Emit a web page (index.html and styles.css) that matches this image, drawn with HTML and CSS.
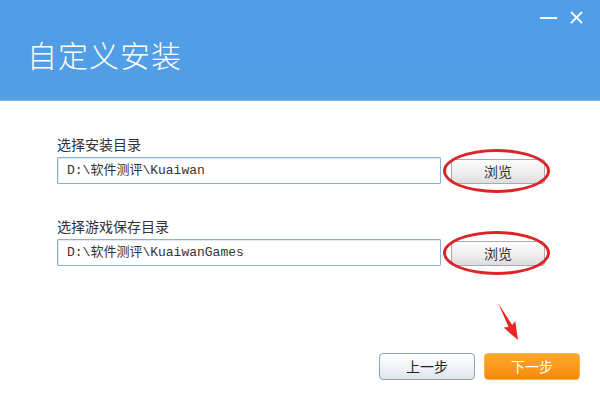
FILE: index.html
```html
<!DOCTYPE html>
<html lang="zh-CN">
<head>
<meta charset="utf-8">
<title>自定义安装</title>
<link rel="stylesheet" href="styles.css">
</head>
<body>
<div class="window">
  <header class="header">
    <h1 class="title">自定义安装</h1>
    <div class="controls">
      <span class="min"></span>
      <svg class="close" width="13" height="13" viewBox="0 0 13 13"><path d="M1 1L12 12M12 1L1 12" stroke="#fff" stroke-width="1.8" fill="none"/></svg>
    </div>
  </header>
  <main class="content">
    <div class="group">
      <div class="label">选择安装目录</div>
      <div class="row">
        <div class="input">D:\软件测评\Kuaiwan</div>
        <div class="browse-wrap">
          <button class="browse">浏览</button>
          <span class="ring"></span>
        </div>
      </div>
    </div>
    <div class="group second">
      <div class="label">选择游戏保存目录</div>
      <div class="row">
        <div class="input">D:\软件测评\KuaiwanGames</div>
        <div class="browse-wrap">
          <button class="browse">浏览</button>
          <span class="ring"></span>
        </div>
      </div>
    </div>
    <footer class="footer">
      <button class="btn prev">上一步</button>
      <button class="btn next">下一步</button>
    </footer>
  </main>
  <svg class="arrow" width="40" height="50" viewBox="0 0 40 50"><polygon points="8,8 22.2,30 25.2,26 28,45 13.6,32.6 18.6,31.9" fill="#e8261f"/></svg>
</div>
</body>
</html>
```

FILE: styles.css
```css
* { box-sizing: border-box; }
html, body { margin: 0; padding: 0; }
body {
  width: 600px;
  height: 400px;
  background: #fff;
  font-family: "Noto Sans CJK SC", "Noto Sans", sans-serif;
  overflow: hidden;
}
.window {
  position: relative;
  width: 600px;
  height: 400px;
  display: flex;
  flex-direction: column;
}
.header {
  height: 101px;
  background: linear-gradient(180deg, #4f9de6 0%, #529fe6 100%);
  border-bottom: 1px solid #7fb6ec;
  display: flex;
  justify-content: space-between;
  align-items: flex-start;
  padding: 0 17px 0 27px;
  flex: none;
}
.title {
  margin: 38px 0 0 0;
  font-size: 30px;
  line-height: 32px;
  font-weight: 300;
  color: #fff;
  letter-spacing: 1px;
}
.controls {
  display: flex;
  align-items: center;
  gap: 13px;
  margin-top: 11px;
}
.min {
  display: block;
  width: 17px;
  height: 2px;
  background: #fff;
}
.close { display: block; }
.content {
  flex: 1;
  display: flex;
  flex-direction: column;
  padding: 35px 20px 20px 57px;
}
.group { display: flex; flex-direction: column; }
.second { margin-top: 34px; }
.label {
  font-size: 14px;
  line-height: 16px;
  color: #333;
  margin-bottom: 5px;
}
.row {
  display: flex;
  align-items: center;
  gap: 10px;
}
.input {
  width: 384px;
  height: 27px;
  border: 1px solid #86b4d8;
  box-shadow: inset 1px 1px 1px #dde9f3;
  border-radius: 1px;
  padding-left: 9px;
  font-family: "Liberation Mono", "Noto Sans CJK SC", monospace;
  font-size: 13px;
  line-height: 25px;
  color: #333;
  background: #fff;
}
.browse-wrap {
  position: relative;
  width: 94px;
  height: 25px;
}
.browse {
  width: 94px;
  height: 25px;
  border: 1px solid #a9a9a9;
  border-radius: 3px;
  background: linear-gradient(180deg, #fdfdfd 0%, #f0f0f0 50%, #dedede 100%);
  font-family: "Noto Sans CJK SC", sans-serif;
  font-size: 14px;
  color: #333;
  padding: 0;
  line-height: 23px;
}
.ring {
  position: absolute;
  left: -8px;
  top: -9px;
  width: 107px;
  height: 44px;
  border: 3px solid #dc2426;
  border-radius: 50%;
}
.footer {
  margin-top: auto;
  display: flex;
  justify-content: flex-end;
  gap: 9px;
}
.btn {
  width: 96px;
  height: 27px;
  border-radius: 4px;
  font-family: "Noto Sans CJK SC", sans-serif;
  font-size: 14px;
  padding: 0;
  line-height: 25px;
}
.prev {
  border: 1px solid #8e9eb3;
  background: linear-gradient(180deg, #ffffff 0%, #eef1f5 60%, #dfe4ea 100%);
  color: #222;
}
.next {
  border: 1px solid #f5b34a;
  background: linear-gradient(180deg, #ffa82e 0%, #fb981a 55%, #f5880a 100%);
  color: #fff;
}
.arrow {
  position: absolute;
  left: 490px;
  top: 295px;
}
```
